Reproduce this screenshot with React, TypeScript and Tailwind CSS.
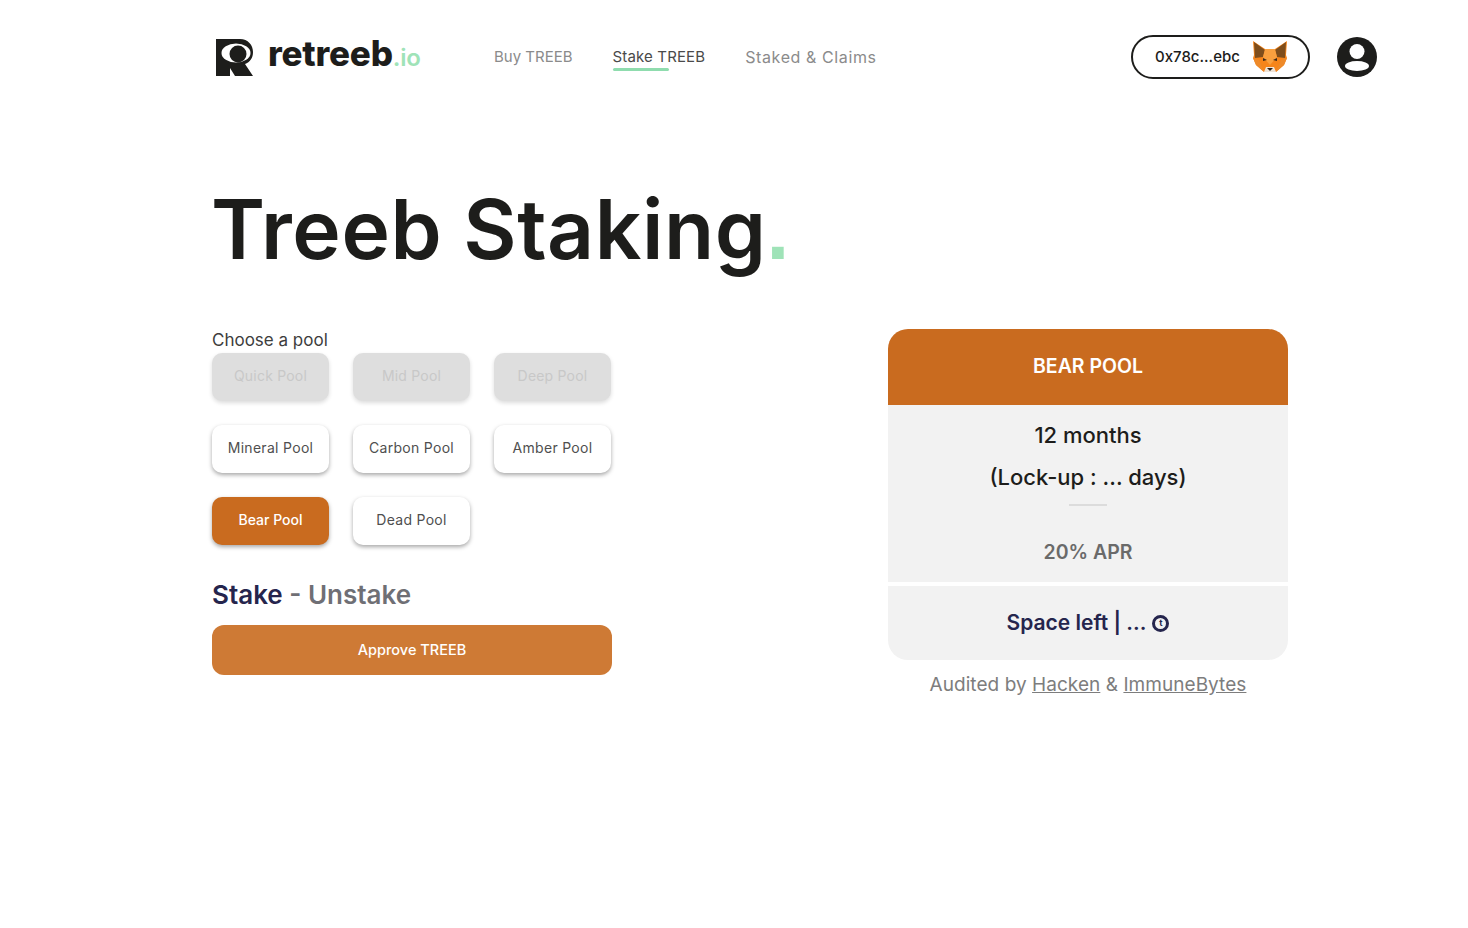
import React from 'react';

const LogoMark = () => (
  <svg width="37" height="37" viewBox="0 0 37 37">
    <path d="M0 0H24C32 0 37 6 37 13C37 19 34 23 29 25L37 37H19L14 29V37H0Z" fill="#1d1d1b" />
    <ellipse cx="20" cy="14" rx="14.5" ry="9.5" fill="#fff" />
    <circle cx="22" cy="15" r="8.5" fill="#1d1d1b" />
  </svg>
);

const Fox = () => (
  <svg width="34" height="32" viewBox="0 0 34 32">
    <polygon points="0,0 12,8 22,8 34,0 33,14 34,17 31,24 23,31 11,31 3,24 0,17 1,14" fill="#f6851b" />
    <polygon points="1,1 12,9 10,16 2,17" fill="#7f4e1c" />
    <polygon points="33,1 22,9 24,16 32,17" fill="#7f4e1c" />
    <polygon points="12,8 22,8 24,16 17,24 10,16" fill="#f9a03f" />
    <polygon points="0,17 6,19 11,31 3,24" fill="#ee8a2a" />
    <polygon points="34,17 28,19 23,31 31,24" fill="#ee8a2a" />
    <polygon points="10,17 14,19 10,20" fill="#3a2a1c" />
    <polygon points="24,17 20,19 24,20" fill="#3a2a1c" />
    <polygon points="11,31 13,26 21,26 23,31" fill="#efe4d8" />
    <polygon points="14,27 20,27 17,30" fill="#2b211b" />
  </svg>
);

const Avatar = () => (
  <svg width="40" height="40" viewBox="0 0 40 40">
    <circle cx="20" cy="20" r="20" fill="#1d1d1b" />
    <circle cx="20" cy="14.5" r="7.5" fill="#fff" />
    <ellipse cx="20" cy="29" rx="12" ry="5" fill="#fff" />
  </svg>
);

const pools = [
  { label: 'Quick Pool', state: 'off' },
  { label: 'Mid Pool', state: 'off' },
  { label: 'Deep Pool', state: 'off' },
  { label: 'Mineral Pool', state: 'on' },
  { label: 'Carbon Pool', state: 'on' },
  { label: 'Amber Pool', state: 'on' },
  { label: 'Bear Pool', state: 'active' },
  { label: 'Dead Pool', state: 'on' },
];

const PoolButton = ({ label, state }: { label: string; state: string }) => {
  if (state === 'off') {
    return (
      <div className="flex h-12 items-center justify-center rounded-[10px] bg-[#dedede] pb-[3px] text-[14px] tracking-[0.2px] text-[#c8c8c8] shadow-[0_2px_4px_rgba(0,0,0,0.14)]">
        {label}
      </div>
    );
  }
  if (state === 'active') {
    return (
      <div className="flex h-12 items-center justify-center rounded-[10px] bg-[#c96b1f] pb-[3px] text-[14px] font-medium text-white shadow-[0_2px_4px_rgba(0,0,0,0.35)]">
        {label}
      </div>
    );
  }
  return (
    <div className="flex h-12 items-center justify-center rounded-[10px] bg-white pb-[3px] text-[14px] tracking-[0.3px] text-[#4f4f4f] shadow-[0_2px_4px_rgba(0,0,0,0.35)]">
      {label}
    </div>
  );
};

export default function App() {
  return (
    <div className="min-h-[928px] bg-white font-['Inter',sans-serif] text-[#1d1d1b]">
      <header className="flex h-[114px] items-center">
        <div className="ml-[216px] flex w-[278px] items-center gap-[15px]">
          <LogoMark />
          <div className="mb-[8px] text-[35px] font-extrabold leading-none tracking-[-0.2px]">
            retreeb<span className="text-[24px] font-semibold text-[#9fe3b8]">.io</span>
          </div>
        </div>
        <nav className="flex items-center gap-10 text-[#8b8b8b]">
          <span className="text-[15px]">Buy TREEB</span>
          <span className="relative text-[15px] tracking-[0.15px] text-[#4a4a4a]">
            Stake TREEB
            <span className="absolute left-0 top-[22px] h-[3px] w-[56px] rounded-sm bg-[#8fdcae]" />
          </span>
          <span className="text-[16px] tracking-[0.6px]">Staked &amp; Claims</span>
        </nav>
        <div className="ml-auto mr-[91px] flex items-center gap-[27px]">
          <div className="flex h-11 w-[179px] items-center justify-between rounded-full border-2 border-[#1d1d1b] pl-[22px] pr-[21px] text-[15px] font-medium">
            <span>0x78c...ebc</span>
            <Fox />
          </div>
          <Avatar />
        </div>
      </header>

      <div className="pl-[212px]">
        <h1 className="-ml-[1px] h-[215px] pt-[66px] text-[82px] font-semibold leading-[100px] tracking-[0.55px] text-[#1d1d1b]">
          Treeb Staking<span className="font-['Liberation_Sans',sans-serif] font-bold text-[#9fe3b8]">.</span>
        </h1>

        <div className="flex items-start">
          <section className="w-[400px]">
            <div className="h-6 text-[17px] leading-[22px] text-[#3d3d3d]">Choose a pool</div>
            <div className="grid w-[399px] grid-cols-3 gap-6">
              {pools.map((p) => (
                <PoolButton key={p.label} label={p.label} state={p.state} />
              ))}
            </div>
            <div className="mt-[33px] h-[34px] text-[26px] font-semibold leading-[34px] text-[#6f6f75]">
              <span className="text-[#25254d]">Stake</span> - Unstake
            </div>
            <div className="mt-[13px] flex h-[50px] items-center justify-center rounded-xl bg-[#ce7a35] text-[14.5px] font-medium text-white">
              Approve TREEB
            </div>
          </section>

          <section className="ml-[276px] w-[400px]">
            <div className="flex h-[76px] items-center justify-center rounded-t-[20px] bg-[#c96b1f] text-[19.5px] font-semibold text-white">
              BEAR POOL
            </div>
            <div className="flex h-[177px] flex-col items-center bg-[#f2f2f2] pt-[9px]">
              <div className="text-[22px] font-medium leading-[42px]">12 months</div>
              <div className="text-[22px] font-medium leading-[42px]">(Lock-up : ... days)</div>
              <div className="mt-[6px] h-0.5 w-[38px] bg-[#dcdcdc]" />
              <div className="mt-[32px] text-[19.5px] font-semibold leading-[28px] text-[#6a6a6a]">20% APR</div>
            </div>
            <div className="mt-1 flex h-[74px] items-center justify-center gap-[6px] rounded-b-[20px] bg-[#f2f2f2] text-[21px] font-semibold text-[#25254d]">
              <span>Space left | ...</span>
              <span className="flex h-[17px] w-[17px] items-center justify-center rounded-full border-[3px] border-[#25254d] text-[9px] font-bold">t</span>
            </div>
            <div className="mt-[11px] text-center text-[19px] leading-[28px] tracking-[0.05px] text-[#7d7d7d]">
              Audited by <span className="underline">Hacken</span> &amp; <span className="underline">ImmuneBytes</span>
            </div>
          </section>
        </div>
      </div>
    </div>
  );
}
